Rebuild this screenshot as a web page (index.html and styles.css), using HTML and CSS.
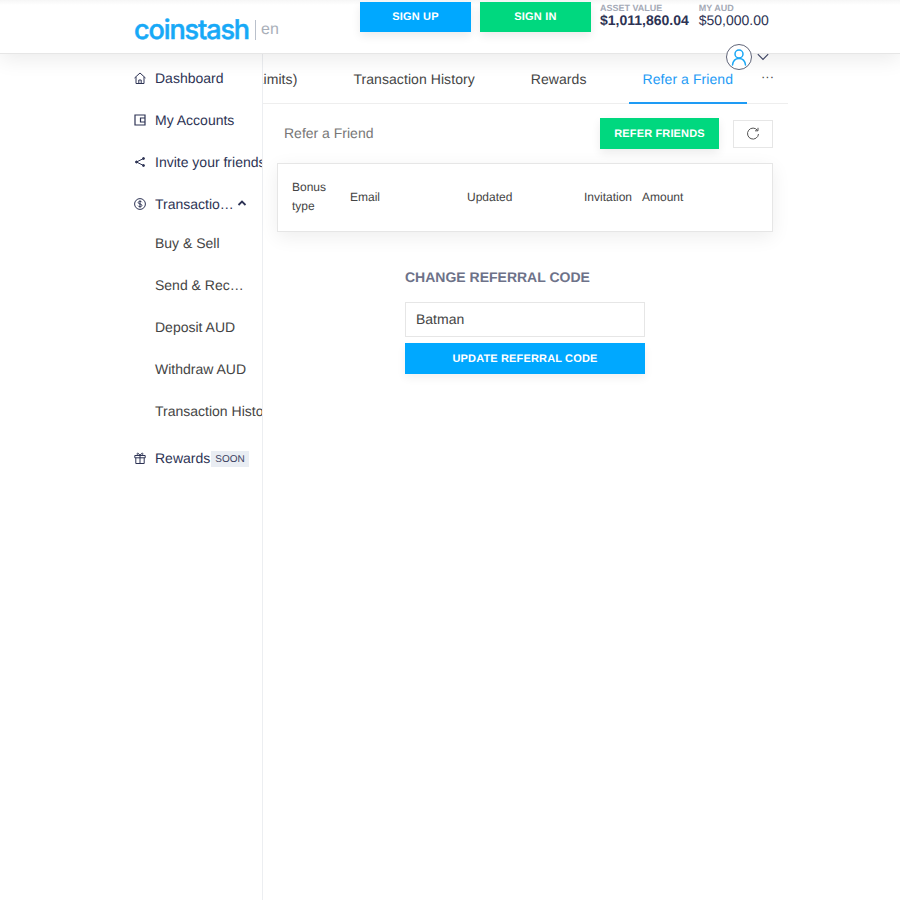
FILE: index.html
```html
<!DOCTYPE html>
<html lang="en">
<head>
<meta charset="utf-8">
<title>Coinstash - Refer a Friend</title>
<link rel="stylesheet" href="styles.css">
</head>
<body>
<header class="topbar">
  <div class="brand">
    <span class="logo">coinstash</span>
    <span class="lang">en</span>
  </div>
  <div class="actions">
    <a class="cta cta-blue">SIGN UP</a>
    <a class="cta cta-green">SIGN IN</a>
  </div>
  <div class="stat stat-asset">
    <span class="stat-label">ASSET VALUE</span>
    <strong class="stat-value">$1,011,860.04</strong>
  </div>
  <div class="stat">
    <span class="stat-label">MY AUD</span>
    <span class="stat-value">$50,000.00</span>
  </div>
  <div class="account">
    <span class="avatar">
      <svg width="16" height="17" viewBox="0 0 16 17" fill="none" stroke="#1aa7f5" stroke-width="1.5" stroke-linecap="round"><circle cx="8" cy="5" r="4"/><path d="M1.500 16c.5-4 2.600-6.500 6.500-6.500s6 2.500 6.500 6.500"/></svg>
    </span>
    <svg class="chev" width="12" height="8" viewBox="0 0 12 8" fill="none" stroke="#3a4060" stroke-width="1.100"><path d="M.8 1.200L6 6.400l5.200-5.200"/></svg>
  </div>
</header>
<div class="layout">
  <nav class="sidebar">
    <a class="nav-item">
      <svg class="nav-icon" viewBox="0 0 12 12" fill="none" stroke="#2d3354" stroke-width="1"><path d="M.5 6L6 1l5.500 5M2 5v6.500h8V5M4.800 11.500V8h2.400v3.500"/></svg>
      <span>Dashboard</span>
    </a>
    <a class="nav-item">
      <svg class="nav-icon" viewBox="0 0 12 12" fill="none" stroke="#2d3354" stroke-width="1.200"><path d="M1 1h10v10H1zM11 4H6.500v4H11"/></svg>
      <span>My Accounts</span>
    </a>
    <a class="nav-item">
      <svg class="nav-icon" viewBox="0 0 12 12" fill="#2d3354" stroke="#2d3354" stroke-width="1"><path d="M9.500 2.500L2.500 6l7 3.500" fill="none"/><circle cx="2.500" cy="6" r="1"/><circle cx="9.500" cy="2.500" r="1"/><circle cx="9.500" cy="9.500" r="1"/></svg>
      <span>Invite your friends</span>
    </a>
    <a class="nav-item">
      <svg class="nav-icon" viewBox="0 0 12 12" fill="none" stroke="#2d3354" stroke-width="1"><circle cx="6" cy="6" r="5.400"/><path d="M7.800 4.200C7.400 3.500 6.800 3.200 6 3.200c-1 0-1.800.5-1.800 1.400C4.200 6.500 7.900 5.500 7.900 7.400c0 .9-.9 1.400-1.900 1.400-.9 0-1.600-.4-2-1.100M6 2.500v7"/></svg>
      <span class="nav-trunc">Transactions</span>
      <svg class="nav-caret" width="10" height="6" viewBox="0 0 10 6" fill="none" stroke="#2d3354" stroke-width="1.800"><path d="M1.500 5L5 1.500 8.500 5"/></svg>
    </a>
    <div class="subnav">
      <a class="sub-item">Buy &amp; Sell</a>
      <a class="sub-item"><span class="sub-trunc">Send &amp; Receive</span></a>
      <a class="sub-item">Deposit AUD</a>
      <a class="sub-item">Withdraw AUD</a>
      <a class="sub-item">Transaction History</a>
    </div>
    <a class="nav-item">
      <svg class="nav-icon" viewBox="0 0 12 12" fill="none" stroke="#2d3354" stroke-width="1"><path d="M.8 3.500h10.400v2.300H.8zM1.800 5.800v5.700h8.400V5.800M6 3.500v8M6 3.500C4 3.500 3 2.800 3 1.900 3 1 4.500.5 6 3.500c1.500-3 3-2.500 3-1.600 0 .9-1 1.600-3 1.600z"/></svg>
      <span>Rewards</span><span class="badge">SOON</span>
    </a>
  </nav>
  <main class="content">
    <div class="tabbar">
      <div class="tabs">
        <a class="tab">Account (Limits)</a>
        <a class="tab">Transaction History</a>
        <a class="tab">Rewards</a>
        <a class="tab tab-active">Refer a Friend</a>
      </div>
      <a class="tab-more">···</a>
    </div>
    <section class="panel">
      <div class="panel-head">
        <h2 class="panel-title">Refer a Friend</h2>
        <a class="btn-refer">REFER FRIENDS</a>
        <a class="btn-refresh">
          <svg width="14" height="14" viewBox="0 0 14 14" fill="none" stroke="#555" stroke-width="1"><path d="M11.500 3.400A5.500 5.500 0 1 0 12.500 7"/><path d="M12 .8v3h-3" /></svg>
        </a>
      </div>
      <div class="card">
        <div class="col col-bonus">Bonus type</div>
        <div class="col col-email">Email</div>
        <div class="col col-updated">Updated</div>
        <div class="col col-invite">Invitation</div>
        <div class="col">Amount</div>
      </div>
      <form class="code-form">
        <h3 class="code-title">CHANGE REFERRAL CODE</h3>
        <input class="code-input" type="text" value="Batman">
        <a class="code-submit">UPDATE REFERRAL CODE</a>
      </form>
    </section>
  </main>
</div>
</body>
</html>
```
FILE: styles.css
```css
* { box-sizing: border-box; }
html, body { margin: 0; height: 100%; }
body {
  font-family: "Liberation Sans", Arial, sans-serif;
  font-size: 14px;
  color: #444;
  background: #fff;
  display: flex;
  flex-direction: column;
  height: 900px;
  overflow: hidden;
  text-rendering: geometricPrecision;
}
.topbar {
  position: relative;
  z-index: 2;
  flex: none;
  height: 54px;
  display: flex;
  align-items: flex-start;
  padding-left: 134px;
  border-bottom: 1px solid #e6e6e6;
  background: linear-gradient(#f6f6f6, #fff 5px);
  box-shadow: 0 4px 22px rgba(0, 0, 0, .09);
}
.brand { width: 226px; height: 53px; display: flex; align-items: center; padding-top: 7px; }
.logo {
  font-family: Inter, sans-serif;
  font-weight: 500;
  font-size: 27px;
  letter-spacing: -1.100px;
  color: #17a9f7;
  width: 121px;
  line-height: 30px;
  -webkit-text-stroke: .5px #17a9f7;
}
.lang {
  border-left: 1px solid #b9c0cb;
  height: 20px;
  line-height: 20px;
  padding-left: 5px;
  font-size: 16px;
  color: #a9afb9;
}
.actions { display: flex; gap: 9px; padding-top: 2px; }
.cta {
  width: 111px;
  height: 30px;
  line-height: 31px;
  text-align: center;
  color: #fff;
  font-size: 11px;
  font-weight: 700;
  letter-spacing: .2px;
  box-shadow: 0 4px 10px rgba(0, 0, 0, .08);
}
.cta-blue { background: #00a8ff; }
.cta-green { background: #00d87f; }
.stat { display: flex; flex-direction: column; padding-top: 4px; color: #2d3354; }
.stat-asset { margin-left: 9px; margin-right: 10px; }
.stat-label { font-size: 9px; line-height: 9px; font-weight: 700; color: #a4a9b6; }
.stat-value { font-size: 14px; line-height: 15px; }
.account { position: absolute; left: 726px; top: 44px; display: flex; align-items: center; gap: 5px; }
.avatar {
  width: 26px;
  height: 26px;
  border: 1.500px solid #5f6478;
  border-radius: 50%;
  background: #fff;
  display: flex;
  align-items: center;
  justify-content: center;
}
.layout { flex: 1; display: flex; min-height: 0; }
.sidebar {
  flex: none;
  width: 263px;
  padding: 3px 0 0 134px;
  border-right: 1px solid #eceef1;
  overflow: hidden;
  background: #fff;
  white-space: nowrap;
  color: #2d3354;
}
.nav-item { height: 42px; display: flex; align-items: center; }
.nav-icon { width: 12px; height: 12px; margin-right: 9px; flex: none; }
.nav-trunc { width: 79.600px; overflow: hidden; text-overflow: ellipsis; }
.nav-caret { margin-left: 2.400px; margin-top: -3px; }
.subnav { margin: -3px 0 5px; }
.sub-item { height: 42px; display: flex; align-items: center; padding-left: 21px; color: #444; }
.sub-trunc { width: 90px; overflow: hidden; text-overflow: ellipsis; }
.badge {
  background: #e9edf3;
  font-size: 10px;
  line-height: 15px;
  padding: 1px 4px 0;
  margin: 2px 0 0 1px;
  color: #3a4060;
}
.content { flex: none; width: 525px; }
.tabbar { height: 50px; display: flex; border-bottom: 1px solid #eee; }
.tabs { flex: 1; min-width: 0; display: flex; justify-content: flex-end; overflow: hidden; margin-bottom: -1px; }
.tab {
  flex: none;
  height: 50px;
  line-height: 50px;
  padding: 0 14px;
  margin-left: 28px;
  font-size: 14px;
  letter-spacing: .07px;
}
.tab-active { color: #1e9bf5; border-bottom: 2px solid #1e9bf5; }
.tab-more {
  flex: none;
  width: 41px;
  text-align: center;
  line-height: 46px;
  font-size: 13px;
  color: #444;
  background: #fff;
}
.panel { padding: 14px 15px 0 14px; }
.panel-head { display: flex; align-items: center; height: 31px; }
.panel-title { flex: 1; margin: 0; padding: 0 0 2px 7px; font-size: 14px; font-weight: 400; color: #777; }
.btn-refer {
  width: 119px;
  height: 31px;
  line-height: 32px;
  text-align: center;
  background: #00d87f;
  color: #fff;
  font-size: 11px;
  font-weight: 700;
  letter-spacing: .15px;
  box-shadow: 0 4px 10px rgba(0, 0, 0, .08);
}
.btn-refresh {
  width: 40px;
  height: 28px;
  margin-left: 14px;
  border: 1px solid #e6e6e6;
  display: flex;
  align-items: center;
  justify-content: center;
}
.card {
  margin-top: 14px;
  height: 69px;
  display: flex;
  align-items: center;
  padding: 0 14px;
  border: 1px solid #e6e6e6;
  font-size: 12px;
  line-height: 19px;
  box-shadow: 0 5px 18px rgba(0, 0, 0, .07);
  background: #fff;
}
.col-bonus { width: 58px; padding-right: 10px; margin-bottom: 2px; }
.col-email, .col-updated { width: 117px; }
.col-invite { width: 58px; }
.code-form { width: 240px; margin: 36px auto 0; }
.code-title { margin: 0; font-size: 14px; line-height: 19px; font-weight: 700; color: #6d7289; }
.code-input {
  display: block;
  width: 100%;
  height: 35px;
  margin-top: 15px;
  padding: 0 10px 2px;
  border: 1px solid #e6e6e6;
  font: 14px "Liberation Sans", Arial, sans-serif;
  color: #444;
  outline: none;
  text-rendering: geometricPrecision;
}
.code-submit {
  display: block;
  height: 31px;
  line-height: 33px;
  margin-top: 6px;
  text-align: center;
  background: #00a8ff;
  color: #fff;
  font-size: 11px;
  font-weight: 700;
  letter-spacing: .15px;
  box-shadow: 0 4px 10px rgba(0, 0, 0, .06);
}
```
